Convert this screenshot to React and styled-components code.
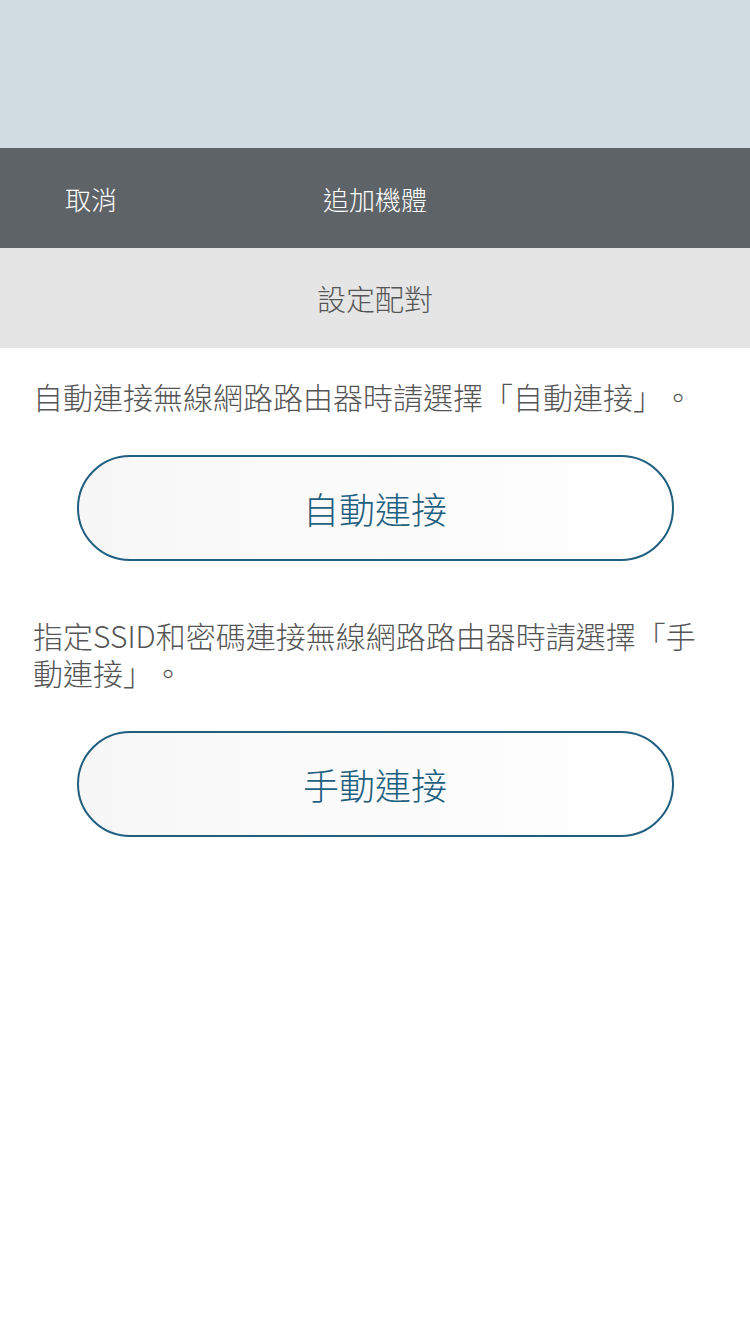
import styled, { createGlobalStyle } from "styled-components";

const GlobalStyle = createGlobalStyle`
  html, body {
    margin: 0;
    padding: 0;
    background: #ffffff;
  }
  body {
    font-family: "Noto Sans CJK TC", "Noto Sans", sans-serif;
    text-spacing-trim: space-all;
  }
`;

export default function App() {
  return (
    <>
      <GlobalStyle />
      <Page>
        <StatusArea />
        <NavBar>
          <NavButton>取消</NavButton>
          <NavTitle>追加機體</NavTitle>
        </NavBar>
        <SubHeader>設定配對</SubHeader>
        <Main>
          <Section>
            <Note>自動連接無線網路路由器時請選擇「自動連接」。</Note>
            <PillButton>自動連接</PillButton>
          </Section>
          <Section>
            <Note>指定SSID和密碼連接無線網路路由器時請選擇「手動連接」。</Note>
            <PillButton>手動連接</PillButton>
          </Section>
        </Main>
      </Page>
    </>
  );
}

const Page = styled.div`
  width: 750px;
  min-height: 1334px;
  background: #ffffff;
  display: flex;
  flex-direction: column;
`;

const StatusArea = styled.div`
  height: 148px;
  background: #d0dbe2;
`;

const NavBar = styled.header`
  height: 100px;
  background: #5e6367;
  position: relative;
  display: flex;
  align-items: center;
  justify-content: center;
`;

const NavButton = styled.button`
  position: absolute;
  left: 65px;
  top: 50%;
  transform: translateY(-50%);
  background: none;
  border: none;
  padding: 0;
  font-family: "Noto Sans CJK TC", "Noto Sans", sans-serif;
  font-weight: 300;
  font-size: 26px;
  color: #ffffff;
`;

const NavTitle = styled.h1`
  margin: 0;
  font-weight: 300;
  font-size: 26px;
  color: #ffffff;
`;

const SubHeader = styled.div`
  height: 100px;
  background: #e5e5e5;
  display: flex;
  align-items: center;
  justify-content: center;
  font-size: 29px;
  font-weight: 300;
  color: #555555;
`;

const Main = styled.main`
  display: flex;
  flex-direction: column;
  padding: 0 33px;
  gap: 26px;
`;

const Section = styled.section`
  display: flex;
  flex-direction: column;
  align-items: center;
  padding-top: 30px;
`;

const Note = styled.p`
  align-self: stretch;
  margin: 0;
  font-size: 30px;
  font-weight: 300;
  line-height: 37px;
  color: #555555;
`;

const PillButton = styled.button`
  margin-top: 40px;
  width: 597px;
  height: 106px;
  border: 2px solid #1f5f80;
  border-radius: 53px;
  background: linear-gradient(to right, #f7f7f7, #ffffff);
  font-family: "Noto Sans CJK TC", "Noto Sans", sans-serif;
  font-weight: 300;
  font-size: 36px;
  color: #1f5f80;
`;
